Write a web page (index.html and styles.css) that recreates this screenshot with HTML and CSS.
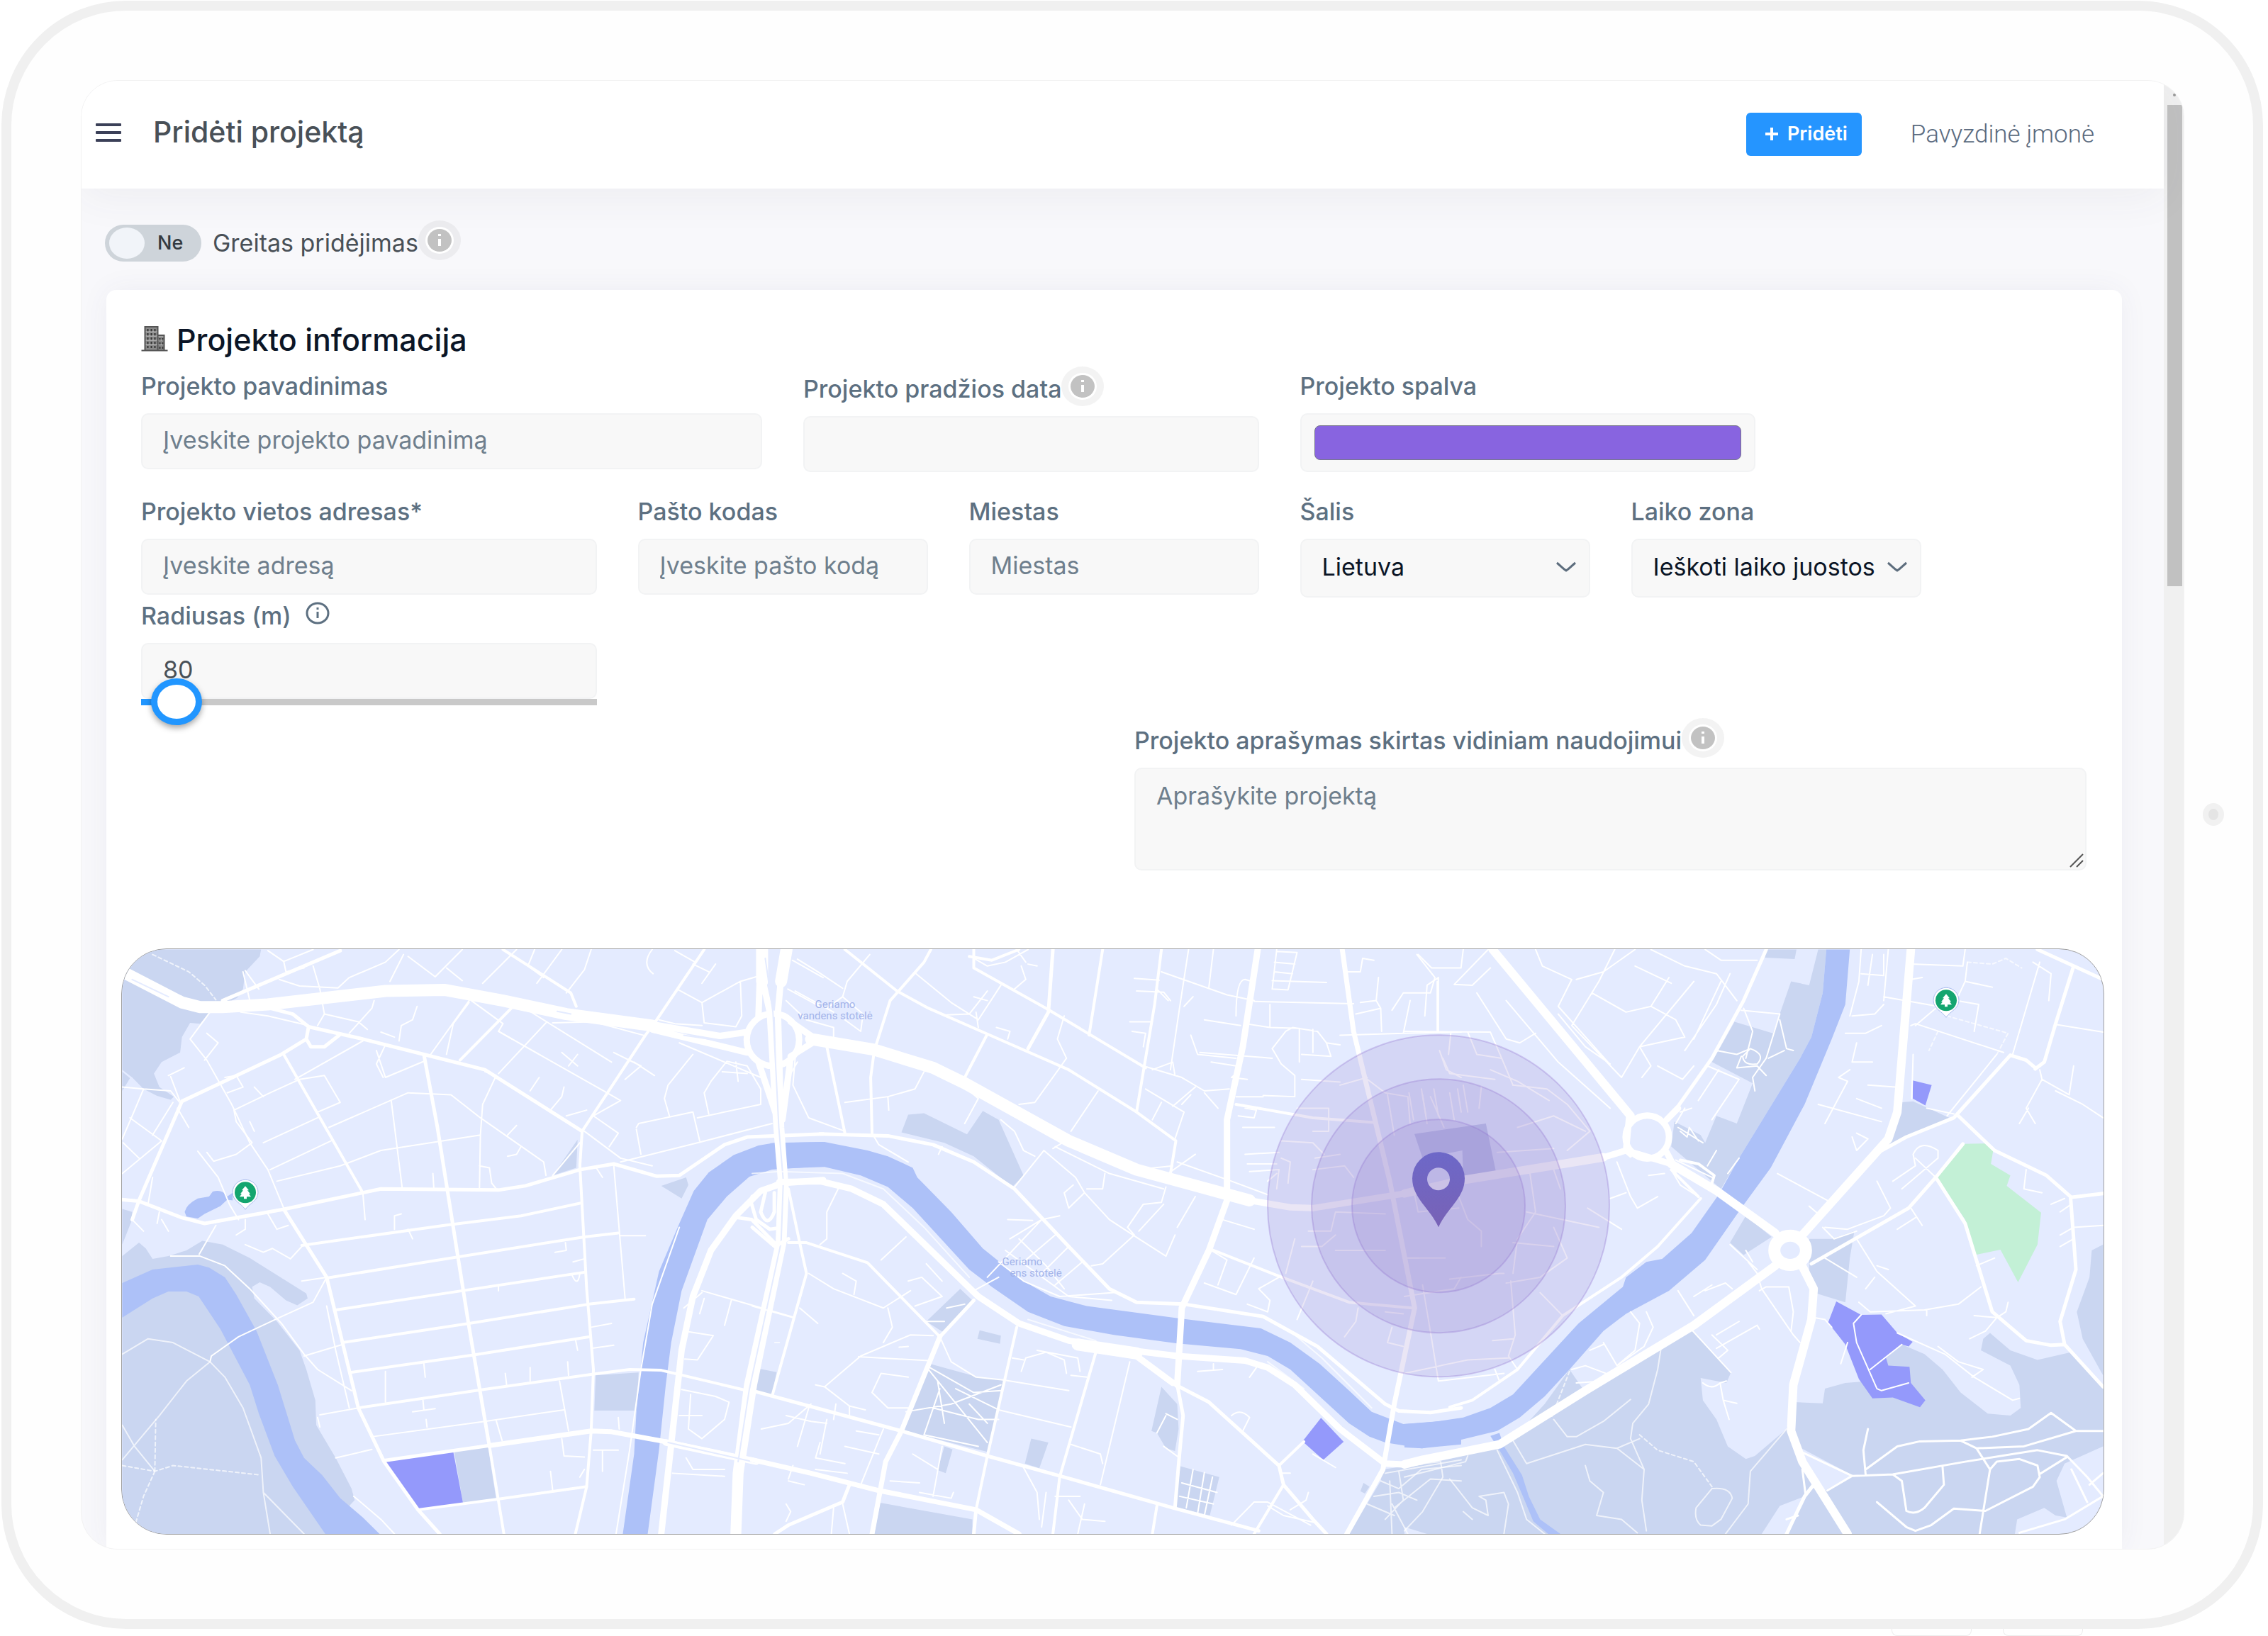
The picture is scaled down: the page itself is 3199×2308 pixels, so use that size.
FILE: index.html
```html
<!DOCTYPE html>
<html lang="lt">
<head>
<meta charset="utf-8">
<meta name="viewport" content="width=device-width, initial-scale=1">
<title>Pridėti projektą</title>
<link rel="stylesheet" href="styles.css">
</head>
<body>
<div class="tablet">
  <div class="screen">
    <div class="page">
      <header class="topbar">
        <button class="menu" type="button" aria-label="Meniu"><span></span><span></span><span></span></button>
        <h1>Pridėti projektą</h1>
        <button class="add" type="button"><svg class="plus" viewBox="0 0 20 20" aria-hidden="true"><path d="M10 1v18M1 10h18"/></svg>Pridėti</button>
        <a class="company" href="#">Pavyzdinė įmonė</a>
      </header>
      <main>
        <div class="quick">
          <label class="switch"><input type="checkbox" aria-label="Greitas pridėjimas"><span class="knob"></span><span>Ne</span></label>
          <span>Greitas pridėjimas</span>
          <svg class="info" viewBox="0 0 60 56" aria-hidden="true"><ellipse class="halo" cx="30" cy="28" rx="30" ry="28"/><ellipse class="ring" cx="30" cy="28" rx="20" ry="19"/><ellipse class="disc" cx="30" cy="28" rx="17" ry="16"/><path class="i" d="M30 26v10M30 19v3"/></svg>
        </div>
        <form class="card">
          <h2><svg class="building" viewBox="0 0 37 36" aria-hidden="true"><path class="wall" d="M5 34V1h18v12h9v21z"/><path class="win" d="M9 4v27M14 4v27M19 4v27M26 17v15M30 17v15"/><path class="floor" d="M5 8h18M5 14h27M5 20h27M5 26h27"/><path class="ground" d="M0 34.500h37M5 34V1h18v33M23 13h9v21"/></svg>Projekto informacija</h2>
          <div class="grid">
            <div class="field w4"><label for="name">Projekto pavadinimas</label><input id="name" type="text" placeholder="Įveskite projekto pavadinimą"></div>
            <div class="field w3"><label class="tall" for="date">Projekto pradžios data<svg class="info" viewBox="0 0 60 56" aria-hidden="true"><ellipse class="halo" cx="30" cy="28" rx="30" ry="28"/><ellipse class="ring" cx="30" cy="28" rx="20" ry="19"/><ellipse class="disc" cx="30" cy="28" rx="17" ry="16"/><path class="i" d="M30 26v10M30 19v3"/></svg></label><input id="date" type="text"></div>
            <div class="field w3"><label for="color">Projekto spalva</label><input id="color" type="color" value="#8864e0"></div>
          </div>
          <div class="grid second">
            <div class="field w3"><label for="address">Projekto vietos adresas*</label><input id="address" type="text" placeholder="Įveskite adresą"></div>
            <div class="field w2"><label for="zip">Pašto kodas</label><input id="zip" type="text" placeholder="Įveskite pašto kodą"></div>
            <div class="field w2"><label for="city">Miestas</label><input id="city" type="text" placeholder="Miestas"></div>
            <div class="field w2"><label for="country">Šalis</label><div class="select"><select id="country"><option>Lietuva</option></select><svg viewBox="0 0 30 16" aria-hidden="true"><path d="M2 2c5 4 8 8 13 11 5-3 8-7 13-11"/></svg></div></div>
            <div class="field w2"><label for="zone">Laiko zona</label><div class="select"><select id="zone"><option>Ieškoti laiko juostos</option></select><svg viewBox="0 0 30 16" aria-hidden="true"><path d="M2 2c5 4 8 8 13 11 5-3 8-7 13-11"/></svg></div></div>
          </div>
          <div class="grid third">
            <div class="field w3 radius"><label for="radius">Radiusas (m)<svg class="hint" viewBox="0 0 34 32" aria-hidden="true"><ellipse cx="17" cy="16" rx="15" ry="14"/><path d="M17 14v9M17 8v3"/></svg></label><input id="radius" type="text" value="80"><input class="slider" type="range" min="50" max="1250" value="80" aria-label="Radiusas (m)"></div>
          </div>
          <div class="grid fourth">
            <div class="field w6"><label class="tall" for="notes">Projekto aprašymas skirtas vidiniam naudojimui<svg class="info" viewBox="0 0 60 56" aria-hidden="true"><ellipse class="halo" cx="30" cy="28" rx="30" ry="28"/><ellipse class="ring" cx="30" cy="28" rx="20" ry="19"/><ellipse class="disc" cx="30" cy="28" rx="17" ry="16"/><path class="i" d="M30 26v10M30 19v3"/></svg></label>
            <div class="area"><textarea id="notes" placeholder="Aprašykite projektą"></textarea><svg viewBox="0 0 22 22" aria-hidden="true"><path d="M2 20 20 2M11 20l9-9"/></svg></div></div>
          </div>
          <svg class="map" viewBox="171 1338 2795 826" preserveAspectRatio="xMidYMid slice" role="img" aria-label="Žemėlapis">
            <defs>
              <linearGradient id="pinfill" x1="0" y1="0" x2="0" y2="1"><stop offset="0" stop-color="#6d68c8"/><stop offset="1" stop-color="#7862b6"/></linearGradient>
              <g id="tree"><path d="M-18 0a18 18 0 1 1 36 0c0 12-12 15-18 24-6-9-18-12-18-24z" fill="#fff" stroke="#a9bbee" stroke-width="1"/><circle r="15" fill="#14a56f"/><path d="M0-9l5 6h-2l4 5h-2l3 4h-6v3h-4v-3h-6l3-4h-2l4-5h-2z" fill="#fff"/></g>
            </defs>
            <!-- parks -->
            <g class="park">
              <g transform="translate(160 1330) scale(.63776 .54209)">
                <path d="M18 17H325L322 35 290 75 285 120 272 143 212 180 190 210 168 208 150 245 146 285 105 310 88 340 100 375 132 400 125 408 95 398 65 380 40 350 18 330ZM18 335 35 352 18 385ZM18 692 40 700 38 725 18 785Z"/>
                <path d="M18 815 55 780 70 795 85 822 120 815 160 800 195 775 240 785 300 820 425 912 428 925 405 943 380 930 345 895 322 883 305 895 310 925 360 985 410 1060 425 1110 445 1190 447 1255 490 1340 525 1420 532 1450 520 1465 540 1538H18Z"/>
                <path d="M752 1324 827 1312 845 1448 772 1460ZM1025 512 1022 585 970 605ZM1210 632 1265 610 1270 630 1255 665ZM1065 1125 1160 1118 1155 1217 1062 1217ZM1423 1107 1465 1117 1455 1175 1413 1168Z"/>
              </g>
              <g transform="translate(1060 1330) scale(.63776 .54209)">
                <path d="M330 493 345 447 380 443 475 498 510 437 545 460 600 605 575 635 490 555 425 520ZM385 985 460 900 487 930 425 1015ZM503 1008 550 1022 548 1043 498 1030ZM393 1095 500 1130 555 1137 522 1325 335 1270ZM425 1310 443 1318 428 1380 410 1372ZM617 1290 655 1300 635 1367 603 1355ZM905 1155 940 1200 943 1265 935 1322 915 1315 895 1275 883 1270ZM947 1362 1033 1390 1012 1490 935 1468ZM283 1457 487 1500V1538H270ZM1395 1370 1568 1340V1538H1320L1390 1400ZM1352 1405 1365 1415 1355 1433 1345 1427Z"/>
              </g>
              <g transform="translate(1980 1330) scale(.63776 .54209)">
                <path d="M800 17 867 17 863 42 797 38ZM915 17 933 17 925 130 900 245 875 300 740 560 700 640 640 580 590 530 597 465 655 500 665 520 690 450 735 470 770 365 680 310 730 205 815 235 830 185 855 100 895 110ZM720 780 755 710 812 765 750 812ZM895 770 945 770 995 750 985 820 975 935 905 910 895 850ZM1095 415 1125 412 1205 455 1130 497 1070 525Z"/>
                <path d="M0 1370 200 1315 240 1290 310 1200 365 1110 400 1170 630 1003 722 1118 712 1145 655 1132 660 1190 690 1240 715 1310 755 1343 775 1335 845 1265 860 1195 925 1198 930 1160 975 1145 1030 1140 1065 1060 1090 1040 1150 1070 1190 1110 1230 1170 1290 1225 1340 1230 1363 1210 1360 1150 1340 1100 1275 1060 1280 1030 1295 1015 1340 1060 1400 1085 1475 1065 1545 1160V1310L1460 1355 1442 1400 1465 1495 1440 1490 1415 1470 1355 1500 1350 1538H0Z"/>
                <path d="M1545 785 1520 800 1515 870 1487 960 1500 1030 1545 1125Z"/>
                <path class="land" d="M790 1538 830 1465 885 1440 850 1538ZM870 1310 990 1385 930 1425ZM0 1520 50 1538H0Z"/>
                <path class="shade" d="M22 497 180 470 203 600 130 612 128 540 40 560Z"/>
              </g>
            </g>
            <!-- water -->
            <g class="water">
              <g transform="translate(160 1330) scale(.63776 .54209)">
                <path d="M18 885 85 850 185 837 210 845 245 870 270 915 315 1010 362 1150 400 1295 420 1340 460 1385 500 1445 550 1495 587 1538H467L395 1415 355 1335 320 1225 300 1150 235 1005 187 920 160 907 120 907 85 925 18 975Z"/>
                <path d="M1568 518 1460 520 1425 527 1370 552 1315 597 1282 645 1250 730 1205 855 1170 1040 1155 1220 1150 1330 1125 1538H1180L1205 1320 1220 1150 1232 1040 1255 905 1312 720 1355 660 1405 608 1455 590 1568 581Z"/>
                <path d="M156 700Q160 680 185 665L210 660 218 647Q240 640 250 660L262 650 262 670 250 668 235 685 200 705 185 717 160 712Z"/>
              </g>
              <g transform="translate(1060 1330) scale(.63776 .54209)">
                <path d="M40 521 160 518 255 540 300 555 355 585 365 610 440 700 510 795 600 880 660 920 740 945 945 977 1125 1003 1190 1040 1255 1095 1320 1165 1370 1220 1440 1252 1568 1240V1305L1480 1315 1400 1300 1365 1285 1320 1250 1255 1180 1190 1110 1140 1075 1080 1057 940 1042 800 1020 690 997 610 960 530 895 480 850 355 690 300 635 240 605 160 583 40 588Z"/>
              </g>
              <g transform="translate(1980 1330) scale(.63776 .54209)">
                <path d="M933 17H985L975 160 945 250 885 420 810 585 745 690 665 825 585 905 490 965 440 1010 365 1110 310 1180 255 1235 205 1270 100 1300 40 1315 0 1313V1252L60 1247 130 1235 190 1210 240 1175 385 990 483 895 490 870 535 830 570 822 635 755 695 655 740 560 875 300 900 245 925 130Z"/>
                <path d="M190 1283 210 1275 220 1310 260 1385 275 1440 300 1500 345 1538H318L285 1505 262 1440 240 1380 210 1320Z"/>
              </g>
            </g>
            <!-- landmarks -->
            <path class="mark" transform="translate(160 1330) scale(.63776 .54209)" d="M597 1350 750 1324 772 1460 672 1475Z"/>
            <path class="mark" transform="translate(1060 1330) scale(.63776 .54209)" d="M1258 1236 1308 1298 1263 1345 1217 1297Z"/>
            <g transform="translate(1980 1330) scale(.63776 .54209)">
              <path class="mark" d="M955 933 1010 968 1055 967 1090 1015 1124 1038 1115 1050 1100 1045 1065 1080 1070 1100 1117 1103 1120 1145 1152 1190 1140 1208 1080 1183 1035 1185 1005 1135 975 1045 937 988ZM1124 358 1166 370 1152 423 1124 405Z"/>
              <path class="green" d="M1177 610 1235 523 1285 522 1302 540 1297 575 1340 605 1332 632 1408 702 1400 785 1357 883 1318 798 1262 812 1240 720Z"/>
            </g>
            <!-- streets, west -->
            <g class="road" transform="translate(160 1330) scale(.63776 .54209)">
              <path class="r2" d="M285 75 300 150M290 72 320 120M340 20 375 48 440 17M375 48 380 75 420 65M440 60 455 120 465 185 450 215M365 95 410 112 495 117 520 90 600 50 630 17M640 30 610 100M650 35 710 88 770 17M735 65 770 98M815 105 890 17M930 17 915 60 950 90M990 17 935 105M1055 17 1040 70 1000 130M1190 17Q1165 55 1192 80M1240 20 1285 50M1280 55 1315 75M1330 55 1300 105M1245 120 1300 155 1385 100 1420 88M1300 155 1305 208 1375 218 1388 190 1385 100M1205 200 1240 210 1300 215"/>
              <path class="r2" d="M280 180 340 190 430 215M465 185 540 205 560 225M575 150 570 170 520 235M670 165 660 200 635 215 630 255M590 232 620 245M212 180 168 250 205 305 260 420 300 520 340 590 375 690M205 235 230 260 200 305M550 255 400 355M580 280 600 350 685 308M600 265 580 315 595 350M785 150 700 290M785 155 750 210 735 290M790 150 860 210 850 230 880 250M970 208 1060 205 1170 240M955 208 850 340M895 160 1100 310"/>
              <path class="r2" d="M120 345 155 325M125 348 145 410M245 350 270 345 285 375 250 390M410 355 465 345 500 415 450 440M265 435 345 390 410 355M265 435 270 465 305 520 270 550 220 568 205 545M300 465 310 490M310 375 330 400M185 542 230 610 255 680 275 720M345 590 480 515M330 520 450 455M360 620 500 580 590 540 810 500M475 480 650 390 745 395 810 455M613 412 637 637M810 455 950 570 955 605M820 335 845 345 815 420 810 500 808 637M808 580 830 585 835 625 845 640M705 600 707 637M870 555 890 550 900 530M870 500 890 475M965 435 990 400 995 375M920 385 940 350"/>
              <path class="r2" d="M970 605 1030 520M850 230 1090 390 1120 410 1060 450M1060 450 1115 495 1095 530M1040 490 1120 560M1120 570 1290 520 1455 470M1155 480 1160 470 1280 440 1295 515M1155 485 1165 550M1290 455 1430 420 1430 380 1400 320 1355 308 1320 360 1305 390 1315 445M1280 290 1225 370 1217 405 1228 450M1250 260 1350 310 1430 350M1375 310 1380 360M1345 335 1400 340M1105 285 1165 320 1130 355M1150 310 1195 345M990 285 1025 320M1005 320 1025 290M1000 450 1045 435M1105 580 1130 925M1065 583 1080 610M1120 762 1175 762M1120 560 1190 580"/>
              <path class="r2" d="M18 375 65 380 125 385 145 415M65 380 40 450 18 510M35 455 105 515 18 600M130 415 85 500M140 430 165 480M20 520 55 560M18 665 55 672M40 720 65 750M75 680 85 610M100 700 95 730M225 735 188 810M125 815 190 815 245 840 300 900 370 990 420 1070 450 1110 525 1165M120 750 105 720M290 785 330 805 350 795 390 822 415 790M290 720 290 745 270 760M340 705 360 745 385 735M550 650 555 720M620 745 620 710 635 705M650 745 660 770M415 880 470 870 440 935 365 975 275 1025 215 1075 212 1090M420 1075 505 1045M470 945 490 1060 520 1210"/>
              <path class="r2" d="M975 805 1000 800 998 780M1015 830 1040 822M1012 862Q1025 900 1030 860M850 890 850 905M1055 1000 1100 990M1055 1055 1105 1047M1020 1030 1025 1060M685 1095 688 1130M600 1115 600 1195M865 1120 868 1150M920 1140 920 1105M1003 1090 1005 1125M660 1220 710 1212M683 1190 685 1215M690 1240 692 1260M455 1228 540 1210M450 1235 455 1260M490 1340 570 1318M845 1243 858 1295M985 1140 1005 1270M990 1290 995 1335 1040 1338M1060 1320 1115 1320M1080 1320 1080 1375M965 1375 970 1425M1040 1370 1030 1390M1115 1235 1117 1265M530 1440 590 1500 620 1538"/>
              <path class="r2 faint" d="M18 1070 75 1030 130 1040 212 1090 245 1130 285 1210 325 1340 330 1430 345 1538M212 1090 160 1140 100 1230 18 1345M330 1430 420 1538M18 1255 45 1310 90 1375"/>
              <path class="r2 dash" d="M18 1360 90 1375 130 1360 320 1384M90 1375 92 1240M90 1375 65 1440 45 1520M85 30 165 75 200 110 225 148"/>
              <path class="r2" d="M1300 905 1505 975M1300 910 1260 950M1305 925 1295 965M1365 930 1350 995M1260 1010 1325 1022 1290 1085 1262 1083M1255 1162 1330 1180 1360 1195 1350 1240 1300 1290 1270 1265 1275 1175M1250 1230 1300 1230M1235 1380 1350 1388M1265 1340 1280 1370 1350 1370M1250 740 1190 940 1165 1110 1140 1320 1110 1538M1500 45 1568 90M1490 120 1560 165"/>
              <path class="r5" d="M240 150 500 20M345 170 395 185 430 218 550 250 685 290 820 330 1035 490M430 218 425 250 370 290 150 412 55 670 40 720M425 250 435 270 465 270 500 238M685 290 715 480 785 1000 830 1310"/>
              <path class="r4" d="M830 1310 862 1538M375 290 550 650M880 168 765 305M860 17 1010 130 1022 165M1305 17 1200 200 1175 240 1035 490 1030 580 1045 900 1060 1110 1055 1270 1045 1415 1020 1538"/>
              <path class="r5" d="M18 668 55 672 150 715 200 730 375 693 550 650 590 640 850 643 910 632 1030 590 1105 575 1200 607 1250 605 1350 525 1400 505 1568 497M375 693 470 870 540 1210 597 1350 672 1475 720 1538M597 1347 830 1308"/>
              <path class="r4" d="M415 787 730 735 900 710 1032 677M470 872 760 817 1040 765 1115 755M490 955 770 905 1040 857M505 1040 785 990 1050 940 1150 927M522 1118 795 1072 1050 1025M540 1210 800 1165 1060 1122 1140 1110 1210 1112 1411 1168M672 1475 845 1448 1045 1415"/>
              <path class="r2" d="M570 1285 820 1245 995 1215"/>
              <path class="r7" d="M830 1308 1055 1270 1100 1272 1220 1298 1411 1345"/>
              <path class="r16" d="M30 82 150 155 190 167 240 167 340 160 600 125 730 122 860 150 1000 185 1190 215"/>
              <path class="r10" d="M1190 212 1340 242 1400 232M1190 225 1400 285M1220 1300 1420 1350"/>
              <path class="r10" d="M1568 617 1480 625 1430 645 1375 710 1320 800 1280 920 1255 1060 1240 1220 1210 1538"/>
              <path class="r5" d="M1380 715 1410 720 1460 780M1410 680 1420 720 1450 745 1480 740M1440 650 1430 700Q1445 745 1460 700L1460 650"/>
              <ellipse class="r10" cx="1457" cy="252" rx="58" ry="68"/>
              <path class="r16" d="M1433 17 1433 100M1487 17 1475 100"/>
              <path class="r10" d="M1433 90 1450 180 1465 480 1475 620 1470 780 1400 1150 1375 1380 1370 1538M1475 90 1468 180 1475 480 1485 640 1480 780 1415 1150 1385 1380 1380 1538M1428 90 1425 190M1425 310 1465 450M1495 310 1478 460"/>
              <path class="seam" d="M1440 40 1457 180 1470 480 1480 620 1475 780 1405 1160 1380 1350M40 95 120 140M980 178 1010 185M1225 1300 1420 1352M1260 240 1390 263"/>
            </g>
            <!-- streets, centre -->
            <g class="road" transform="translate(1060 1330) scale(.63776 .54209)">
              <path class="r2" d="M100 42 145 75 200 118M260 30 210 100 200 140 165 170M95 125 180 180M75 150 120 200 180 220 180 250M200 140 245 185 240 230 205 200M360 78 440 155 500 200 550 110M520 125 480 185 430 187M490 140 520 150M495 180 500 220M595 60 605 95 580 120M490 40 520 60 560 50 610 17M585 17 605 50M610 55 630 60M540 220 570 230 565 250M690 190 675 250 695 300 680 325M680 325 625 415 590 420M765 385 705 490M845 92 900 97M850 125 910 128 925 150M905 75 1050 135 1110 150M965 17 945 170 925 330M1020 17 1010 115M835 205 885 205M840 230 870 235 865 270M975 140 955 165M920 150 895 120"/>
              <path class="r2" d="M1070 190Q1070 95 1090 95L1105 100M1160 17 1150 120 1185 122 1205 25 1160 22M1155 50 1200 55M1155 75 1195 80M1150 98 1270 103M1110 152 1330 158M1145 160 1145 220 1210 222 1210 310M1145 220 1090 210M1150 275 1180 230 1195 220 1250 230 1270 260 1300 265M1150 275 1170 315 1200 345 1200 400 1130 397M1215 355 1300 362M1270 260 1280 295 1215 290M1240 225 1240 285M990 285 1150 300M1000 200 1080 215M970 240 985 290 1070 300M1015 310 1070 320M870 380 955 440 935 510M865 320 950 350 1000 385 1055 380M980 375 930 425M905 415 885 460M950 420 970 395M1000 390 1030 430M885 330 930 310 935 345"/>
              <path class="r2" d="M1080 330 1060 350 1095 355M1070 400 1130 400M1090 430 1115 435 1110 455 1075 450M1085 480 1155 480M1090 550 1165 545M1095 575 1160 575M1100 595 1165 590 1160 640M1170 515 1240 520 1265 550M1170 560 1190 570 1185 625M1140 620 1160 600M1205 430 1275 430 1275 490 1240 490M1245 560 1300 550M1240 590 1310 580 1330 610M1230 750 1280 750 1290 700 1400 705M1215 790 1260 790 1290 760M1200 770 1180 860M1240 880 1205 980M1340 950 1335 985 1310 1025M1290 800 1400 800M1440 820 1475 820M1400 960 1440 965M1415 1000 1405 1040 1440 1050"/>
              <path class="r2" d="M1300 240 1440 235 1568 232M1345 155 1380 150 1390 170 1392 230M1335 185 1390 170M1310 75 1345 75 1350 40 1375 45M1385 90 1380 150M1415 175 1440 130 1500 130 1510 90 1470 30M1515 100 1515 232M1440 235 1455 150M1355 350 1400 390 1450 400M1300 370 1360 350M1405 395 1420 500M1450 400 1455 470M1480 380 1490 450M1520 280 1535 330 1568 350M1545 235 1540 290M1500 400 1530 480M1560 380 1568 440"/>
              <path class="r2" d="M470 375 500 405 470 470M550 460 580 490 600 540 625 555M665 535 700 510M645 540 580 635M645 540 715 610 735 650 700 690 690 650 710 630M740 640 775 640 780 600M735 650 790 720 855 770M670 530 790 600 910 640M850 590 930 580M920 600 980 550M940 570 1060 620 1140 655M915 635 905 675 865 680 830 740M910 680 855 750M830 740 845 760 775 835 750 840M855 770 915 815 935 760M980 660 940 740M565 720 620 722M570 770 640 720 680 710M590 770 650 840 690 900M560 800 700 920 795 930M640 720 520 870M670 760 600 830M700 790 640 860M730 830 670 890M545 870 490 905M545 830 600 880 680 920 800 910"/>
              <path class="r2" d="M205 415 300 400 360 380 380 335M300 400 302 435M95 300 90 370 125 455 205 490M85 340 100 310M265 495 280 525 345 570M420 530 412 550M340 765 285 825M190 640 165 700 165 770 150 785M345 880 375 870 420 920 360 945M385 835 420 880M200 860 230 880 225 915M125 860 180 900 290 950 350 905M300 950 310 1000 290 1040M0 945 90 975M105 950 145 990M160 1155 240 1075 350 1020 400 1022M235 1077 390 1087M140 1150 160 1155 215 1205 250 1215M265 1170 285 1120 345 1130M265 1170 300 1210 345 1210M215 1205 215 1235M325 1052 345 1050M575 1080 600 1085M595 1115 605 1080 650 1065 690 1085 695 1120M630 1060 720 1080 725 1115M705 1125 740 1130M555 1137 700 1165"/>
              <path class="r2" d="M545 1215 705 1260M705 1305 770 1330 775 1355M415 1025 440 1090 495 1130 555 1137M393 1105 490 1170 550 1165M400 1210 500 1240 545 1240M390 1110 520 1300M415 1160 380 1280 500 1310M340 1220 440 1200 550 1150M410 1140 425 1250M480 1200 520 1250M450 1160 545 1215M385 985 425 985M430 950 470 940M600 1365 630 1430 635 1500M650 1430 640 1520M670 1440 725 1440M700 1450 730 1500 780 1505M735 1460 720 1538M20 1265 80 1250 130 1200M75 1230 130 1245 165 1250M125 1210 100 1310M185 1200 180 1240M230 1270 280 1280M150 1300 140 1340 205 1355M140 1370 210 1380M80 1395 90 1360M80 1400 115 1410M165 1240 150 1330M290 1265 240 1410M205 1310 280 1330M305 1400 370 1405M355 1330 410 1370M420 1310 400 1440M370 1430 440 1445 445 1430M75 1460 85 1480 75 1505M180 1470 175 1538M200 1460 215 1538"/>
              <path class="r2" d="M1000 885 1070 915 1110 820M1040 720 1110 745M1015 800 1050 825 1030 890M1095 940 1140 960 1145 930 1120 900 1165 870M985 1115 1040 1110M1020 1095 1020 1110M1115 1105 1100 1130M1060 1230Q1080 1210 1100 1235L1085 1270M1170 1380 1190 1380M1240 1330 1290 1365M1230 1430 1225 1450 1190 1475M1060 1515 1110 1455 1140 1455 1235 1515M1140 1465 1175 1490 1250 1510M975 1370 960 1470M1000 1378 985 1485M950 1405 1028 1430M945 1440 1020 1460M1018 1390 1000 1490M895 1275 915 1230M910 1310 945 1340M915 1225 940 1240"/>
              <path class="r2 faint" d="M1400 1380 1568 1345M1390 1400 1430 1420 1480 1370 1568 1360M1410 1400 1415 1538M1430 1375 1440 1450 1400 1500M1375 1440 1430 1430 1470 1450M1420 1470 1500 1395 1568 1400M1360 1460 1420 1490M1415 1460 1450 1538"/>
              <path class="r2 faint" d="M0 600 60 595 200 600 290 640 380 740 480 870M1190 1010 1260 1080 1370 1210M1140 1090 1220 1160M50 1040 60 1040M610 980 760 1035"/>
              <path class="r4" d="M205 17 320 125 390 170 520 237 700 330 850 440 937 515 925 600M395 17 380 50 305 150 270 280 262 350 265 495M165 270 205 495M490 65 650 170 870 325M490 17 490 65M480 35 530 45 590 17M775 17 745 240M905 17 890 160 850 440M520 237 470 350M1070 420 1240 455 1375 467M1010 795 1160 865 1320 935 1460 950M80 780 120 780 255 832 415 1025M80 640 105 780 120 860 45 1175M585 1000 520 1335 495 1475M760 1065 680 1390 665 1538M895 1465 885 1538M1165 1360 1220 1298M1175 1410 1110 1538"/>
              <path class="r2" d="M835 1090 770 1410"/>
              <path class="r5" d="M665 17 655 180 610 275M150 497 300 502 400 525 490 570 580 640 700 790 790 900 850 935 955 940 1130 972 1250 1050 1400 1200 1430 1218 1500 1222 1568 1210M0 1165 330 1270 520 1335 690 1390 930 1470 1120 1530M850 1075 920 1140 1010 1195 1165 1360 1175 1410 1240 1500 1270 1538M940 1150 953 1230 945 1330 935 1470M415 1025 490 930M495 1475 490 1538M215 1410 200 1455 80 1515 50 1538"/>
              <path class="r7" d="M415 1025 330 1270 295 1350 265 1538M0 1345 130 1380 280 1425 495 1475 590 1538M1305 17 1330 230 1410 620 1465 950 1420 1200 1395 1370 1315 1538"/>
              <path class="r10" d="M1118 17 1085 270 1050 460 1050 670 1010 800 950 950 940 1150M1240 690 1443 652"/>
              <path class="r16" d="M130 250 270 278 400 325 470 365 700 515 850 590 960 625 1100 670M720 1045 850 1068"/>
              <path class="r10" d="M1100 670 1190 688 1240 690M85 205 140 250M85 295 140 255M60 622 150 620 220 640 290 680 360 760 500 920 590 990 700 1035 850 1062 940 1075 1090 1087 1140 1105 1200 1150 1300 1265 1400 1355 1440 1357 1480 1350M850 1075 930 1145"/>
              <path class="r5" d="M0 660 60 622M0 740 50 790 80 770"/>
            </g>
            <!-- streets, east -->
            <g class="road" transform="translate(1980 1330) scale(.63776 .54209)">
              <path class="r2" d="M30 30 60 65 125 65 130 17M110 108 150 110 190 65M45 190 50 110 75 90 75 230M0 230 190 232 215 300 240 370M185 17 110 108M160 130 225 250 255 260 290 235M225 150 340 310 455 430M290 17 305 60 370 95 340 165 450 310M465 17 430 100 370 215 480 350M415 130 490 180 545 165 585 90M545 165 600 200 620 245 520 270 480 350M520 270 640 100M510 60 590 105M380 95 440 75 510 17M545 17 620 60 690 80 735 150M665 17 700 45 780 45M720 80 690 160 620 280M700 100 640 250M745 175 830 185M750 170 770 230 755 300M560 320 615 355 640 320M520 270 545 320 525 350M340 185 400 270 455 315M670 320 740 355 680 460M695 330 650 410"/>
              <path class="r2" d="M690 280 735 290 765 275Q800 290 780 315 750 320 748 295L765 275M735 325 780 320 800 345M830 185 800 300 770 350 775 385M830 200 845 275 860 280M805 300 840 280M735 325 745 295M620 430 600 470M605 480 660 520M610 490 625 505 630 480 650 515M690 540 670 580M600 565 680 610M610 440 635 430M740 560 715 600M825 600 935 670M915 420 1055 465M985 330 960 350 980 360 930 470M1025 370 1085 375M1000 405 1055 430M990 190 1040 185 1060 160M975 235 1020 235 1055 215M1000 260 990 310 1035 310M1010 17 1005 100 985 190M1035 30 1025 110M1010 80 1060 85 1060 30M1070 17 1060 150M1120 95 1145 90M1060 140 1180 165M1120 215 1130 210 1325 285M1125 290 1122 405M1180 165 1130 215M1240 100 1220 150 1270 160 1260 230"/>
              <path class="r2 dash" d="M1180 230 1160 280M1200 190 1335 235 1310 290M1245 50 1300 55 1330 40 1365 65"/>
              <path class="r2" d="M1120 55 1235 60 1240 17M1245 50 1240 100 1300 115M1390 50 1430 80 1425 150M1405 50 1345 290M1440 212 1545 232M1405 330 1410 355 1470 395 1480 320M1410 355 1375 430 1395 470M1440 385 1500 420 1545 455M1380 430 1360 470M1310 290 1200 450M1155 430 1215 445M990 505 1000 540 1025 510 1000 495M1045 620 1075 690 1060 710 980 745 930 740M1080 620 1130 580 1125 550Q1140 510 1180 540L1180 560 1100 640M1120 690 1145 735M1090 745 1130 715M895 685 915 705M925 740 950 770 1000 750M1130 560 1175 610M1000 770 1045 855 1130 945 1065 965M1045 840 1070 850M1020 900 1040 870M930 820 1000 870M1005 935 1030 960 1150 955 1225 940 1275 895M1155 955 1155 970M1265 840 1305 820M1375 590 1370 640 1410 650M1430 680 1460 665M1450 700 1475 680M1450 760 1480 740 1545 735M1450 790 1480 770M1250 1030 1285 1010 1310 975 1330 960 1335 935M1260 970 1310 975"/>
              <path class="r2" d="M1010 968 993 990 1000 1040 1045 1160 1055 1165 1115 1145M1030 1110 1100 1045M1090 1015 1195 1070 1260 1130 1345 1190 1360 1185M1180 1050 1225 1090 1280 1110 1255 1130M980 1040 965 1095M905 975 930 980 945 1000M605 905 640 970M780 860 790 900 860 1020 875 1040M785 905 800 895 850 895 860 960 855 1010M665 905 710 885 725 900M640 920 680 890M630 1000 722 1118M680 1020 715 1060 695 1080M690 1055 780 995 785 1005M690 1020 740 985M440 1040 470 1100 510 1060 520 990 500 960M535 960 550 1000 530 1050 470 1100M410 1060 440 1045M370 1110 400 1100 445 1120 440 1140 380 1145M780 860 760 830M720 785 780 850M755 800 770 830M540 605 575 600M470 570 500 660 515 690 560 660M490 650 455 665M590 590 610 630 650 660M660 1145Q680 1165 698 1145L712 1140M698 1145 705 1190 735 1198M705 1190 718 1240"/>
              <path class="r2" d="M240 370 315 380 360 420 410 490 360 540M215 300 160 290 140 232M190 330 250 360 320 410M250 480 330 450 400 490M205 545 330 535M85 300 100 340 200 355M130 370 140 440M170 375 165 430M100 390 110 460M65 380 75 450M40 395 50 470M10 390 20 460M120 660 140 720 170 750 170 790M20 640 30 700 120 690M0 820 90 820M270 700 430 740M275 580 290 700 250 770 240 860M330 740 360 820 300 870 225 885M100 875 210 860 220 860M330 590 345 640M405 690 480 745M240 780 330 790M300 910 350 970M40 890 60 1030 75 1140M0 1120 140 1085 230 1080M235 880 245 1020 230 1075 250 1110M75 1140 220 1120M200 1110 210 1140M195 1035 240 1030M125 870 110 900 0 920"/>
              <path class="r2 faint" d="M240 1295 270 1355 400 1305 470 1315 520 1290M330 1240 360 1285 380 1285 440 1245 500 1188M568 1050 560 1110 540 1200 505 1250 500 1290 530 1370 525 1450 535 1530M400 1360 410 1400 440 1430 425 1490 480 1500 515 1535M470 1315 530 1370M655 1515Q640 1500 645 1470L680 1420Q720 1415 725 1445L700 1500 680 1517ZM845 1265 765 1375 760 1460 710 1538M205 1320 250 1430 270 1500 310 1538M80 1350 85 1390 40 1480 0 1530M0 1390 135 1350 140 1335M0 1360 80 1350M100 1395 150 1470 185 1490 180 1450 165 1440 220 1430 230 1460 220 1538M130 1480 150 1500"/>
              <path class="r2 dash" d="M520 1280 560 1320 640 1350 680 1415M365 1115 325 1235"/>
              <path class="r3" d="M1025 1265 1015 1320 1020 1385M1020 1370 1090 1310 1140 1297 1230 1295 1300 1285 1380 1265 1430 1223 1485 1270 1545 1270M1230 1295 1265 1315 1370 1310 1485 1270M870 1320 990 1387 1080 1383 1240 1350 1400 1320 1465 1335 1510 1390 1545 1440M1080 1383 1100 1400 1110 1478Q1130 1490 1150 1470L1193 1410 1190 1363M1265 1315 1295 1370 1272 1538M1295 1370 1310 1350 1360 1343 1400 1360 1405 1390 1390 1415 1285 1478 1215 1472 1165 1515 1130 1530 1110 1520 1045 1455M1405 1382 1465 1338M1545 1440 1460 1500 1360 1535M1545 1380 1515 1410M1475 1370 1510 1455M935 1425 990 1387M880 1370 887 1435M845 1500 870 1490"/>
              <path class="r5" d="M590 450 680 300 750 150 800 17M1040 550 1110 505 1215 455 1340 292 1375 305 1395 325M1480 60 1440 210 1415 310 1395 328M1400 17 1480 60 1545 95M1225 450 1305 540 1420 605 1473 660 1485 850 1450 985 1460 1045 1545 1155M1473 662 1545 652M1460 1045 1430 1047 1375 1035 1300 960 1240 730 1175 610 1115 690 900 835M1175 610 1235 523M905 1410 885 1440 845 1538"/>
              <path class="r4" d="M100 1208 150 1190 250 1110 350 970 480 870 560 790 655 665M590 590 650 660M610 565 650 575 685 605 680 625M485 540 500 555"/>
              <path class="r12" d="M195 17 500 450M0 652 130 617 440 558M590 575 690 645 820 755M1120 17 1090 440 1070 510 880 760M820 840 640 995 400 1165 210 1305 40 1345 0 1357M875 830 905 900 900 980 860 1150 855 1270 880 1350 980 1538"/>
              <path class="r10" d="M440 558 490 540 590 575M580 460 605 430M497 450 490 540M580 545 600 590"/>
              <ellipse class="r10" cx="537" cy="505" rx="48" ry="56"/>
              <ellipse class="r16" cx="853" cy="800" rx="35" ry="38"/>
            </g>
            <!-- place names -->
            <g class="place"><text x="1177" y="1422">Geriamo</text><text x="1177" y="1438">vandens stotelė</text><text x="1441" y="1785">Geriamo</text><text x="1460" y="1801">ens stotelė</text></g>
            <!-- radius and pin -->
            <g class="zone"><circle cx="2028" cy="1701" r="241"/><circle cx="2028" cy="1701" r="179"/><circle cx="2028" cy="1701" r="122"/></g>
            <path fill="url(#pinfill)" fill-rule="evenodd" d="M2028 1731C2016 1704 1991 1690 1991 1662a37 37 0 0 1 74 0C2065 1690 2040 1704 2028 1731ZM2028 1647a16 16 0 1 0 0 32 16 16 0 0 0 0-32Z"/>
            <use href="#tree" x="345" y="1682"/><use href="#tree" x="2744" y="1411"/>
          </svg>
        </form>
      </main>
    </div>
    <div class="scrollbar" aria-hidden="true"><div class="arrow"></div><div class="thumb"></div></div>
  </div>
  <div class="home"></div>
</div>
<div class="keys"><span></span><span></span></div>
</body>
</html>
```

FILE: styles.css
```css
* { box-sizing: border-box; }

body {
  margin: 0;
  background: #fff;
  color: #495057;
  font-family: Inter, "Open Sans", sans-serif;
  font-size: 34px;
  line-height: 36px;
}

h1, h2 { margin: 0; font-weight: 500; }
button, input, select, textarea { font: inherit; margin: 0; }

/* device frame */
.tablet {
  position: relative;
  margin: 1px 7px 0 2px;
  padding: 98px 97px 98px 98px;
  border: 14px solid #f0f0f0;
  border-radius: 176px;
  background: #fefefe;
}
.screen {
  display: flex;
  border: 1px solid #f2f2f2;
  border-radius: 52px;
  overflow: hidden;
  background: #f8f8fb;
}
.home {
  position: absolute;
  right: 41px;
  top: 50%;
  width: 30px;
  height: 32px;
  margin-top: -16px;
  border: 8px solid #f1f1f1;
  border-radius: 50%;
  background: #e4e4e4;
}
.keys { display: flex; justify-content: flex-end; gap: 44px; padding-right: 261px; }
.keys span {
  width: 113px;
  height: 10px;
  border: 1px solid #ececec;
  border-top: 0;
  border-radius: 0 0 8px 8px;
}

.page { flex: 1; min-width: 0; }
.scrollbar { width: 28px; padding: 12px 2px 0 5px; background: #f0f0f0; }
.arrow { width: 4px; height: 4px; margin: 6px 8px 12px; background: #999; border-radius: 2px; }
.thumb { height: 33%; background: #c1c1c1; }

/* top bar */
.topbar {
  position: relative;
  display: flex;
  align-items: center;
  height: 152px;
  padding: 0 98px 0 20px;
  background: #fff;
  box-shadow: 0 12px 60px rgba(60, 60, 90, .06);
}
.menu {
  display: flex;
  flex-direction: column;
  gap: 7px;
  width: 36px;
  margin-bottom: 6px;
  padding: 0;
  border: 0;
  background: none;
}
.menu span { height: 4px; border-radius: 1px; background: #3b4058; }
h1 { flex: 1; margin: 0 0 8px 45px; font-size: 41px; line-height: 48px; }
.add {
  display: flex;
  align-items: center;
  gap: 12px;
  height: 61px;
  margin-bottom: 2px;
  padding: 0 20px 0 26px;
  border: 0;
  border-radius: 6px;
  background: #2595ff;
  color: #fff;
  font-size: 27px;
  font-weight: 600;
}
.plus { width: 20px; height: 20px; fill: none; stroke: #fff; stroke-width: 4; }
.company {
  margin-left: 69px;
  color: #5b6b80;
  font-family: Roboto, sans-serif;
  font-weight: 300;
  font-size: 35px;
  text-decoration: none;
}

/* quick add */
.quick { display: flex; align-items: center; height: 52px; margin: 51px 0 40px 33px; }
.switch {
  display: flex;
  align-items: center;
  gap: 18px;
  width: 136px;
  height: 52px;
  margin-right: 16px;
  padding: 0 6px;
  border-radius: 26px;
  background: #ced4da;
  color: #343a40;
  font-size: 27px;
  font-weight: 500;
}
.switch input { position: absolute; opacity: 0; }
.knob { width: 50px; height: 44px; border-radius: 50%; background: #f1f4f9; }
.info { flex: none; width: 60px; height: 56px; margin: -14px 0 -6px; }
.halo { fill: #888; fill-opacity: .1; }
.ring { fill: #fff; }
.disc { fill: #c2c2c2; }
.i { fill: none; stroke: #fff; stroke-width: 4; }

/* form */
.card {
  margin: 0 59px 0 35px;
  padding: 46px 50px 20px 49px;
  border-radius: 14px 14px 0 0;
  background: #fff;
  box-shadow: 0 0 40px rgba(60, 60, 120, .06);
}
h2 { display: flex; align-items: center; gap: 12px; margin-bottom: 24px; font-size: 43px; line-height: 48px; color: #0b1526; }
.building { width: 38px; height: 36px; margin-bottom: 2px; fill: none; }
.wall { fill: #8a8a8a; }
.win { stroke: #333; stroke-width: 2; stroke-dasharray: 4 2; }
.floor { stroke: #c8c8c8; stroke-width: 1; }
.ground { stroke: #555; stroke-width: 2; }

.grid { display: grid; grid-template-columns: repeat(12, minmax(0, 1fr)); column-gap: 58px; align-items: start; }
.second { margin-top: 38px; }
.third { margin-top: 8px; }
.fourth { margin-top: 34px; }
.w2 { grid-column: span 2; }
.w3 { grid-column: span 3; }
.w4 { grid-column: span 4; }
.w6 { grid-column: 7 / span 6; }

.field label { display: flex; margin-bottom: 20px; color: #5d7081; font-weight: 500; white-space: nowrap; }
.field .tall { padding-top: 4px; }
.field input, .field select, .field textarea {
  display: block;
  width: 100%;
  height: 79px;
  padding: 0 29px 4px;
  border: 2px solid #f2f3f4;
  border-radius: 10px;
  background: #f8f8f8;
  color: #495057;
}
.field ::placeholder { color: #6f7f8d; opacity: 1; }
.field input[type="color"] { height: 83px; padding: 15px 18px; }
::-webkit-color-swatch-wrapper { padding: 0; }
::-webkit-color-swatch { border: 1px solid #77788a; border-radius: 8px; }
.select, .area { position: relative; }
.field select { height: 83px; padding-right: 0; appearance: none; color: #0b1526; }
.select svg { position: absolute; right: 19px; top: 32px; width: 30px; height: 16px; fill: none; stroke: #5d6d7d; stroke-width: 3; }
.hint { width: 34px; height: 32px; margin: -2px 0 0 20px; fill: none; stroke: #5d7081; stroke-width: 3; }
.field textarea { height: 145px; padding: 20px 29px; resize: none; }
.area svg { position: absolute; right: 3px; bottom: 3px; width: 22px; height: 22px; stroke: #555; stroke-width: 2; }

.radius .slider {
  appearance: none;
  height: 66px;
  margin: -29px 0 -34px;
  padding: 0;
  border: 0;
  background: none;
}
.slider::-webkit-slider-runnable-track { height: 9px; background: linear-gradient(90deg, #2196ff 40px, #c9c9c9 40px); }
.slider::-webkit-slider-thumb {
  appearance: none;
  width: 72px;
  height: 66px;
  margin-top: -29px;
  border: 9px solid #2196ff;
  border-radius: 50%;
  background: #fff;
  box-shadow: 0 4px 8px rgba(0, 0, 0, .35);
}

/* map */
.map {
  display: block;
  width: calc(100% + 53px);
  aspect-ratio: 2795 / 826;
  margin: 110px -25px 0 -28px;
  border: 1px solid #a0a0a0;
  border-radius: 64px;
  overflow: hidden;
  background: #e4ebff;
}
.map path, .map ellipse { vector-effect: non-scaling-stroke; }
.park { fill: #cad6f1; }
.land { fill: #e4ebff; }
.shade { fill: #bcc5ec; }
.water { fill: #adc1f8; }
.mark { fill: #9499fb; }
.green { fill: #c3f0d6; }
.road { fill: none; stroke: #fff; stroke-linejoin: round; stroke-linecap: round; }
.r2 { stroke-width: 2; }
.r3 { stroke-width: 3; }
.r4 { stroke-width: 4; }
.r5 { stroke-width: 5; }
.r7 { stroke-width: 7; }
.r10 { stroke-width: 9; }
.r12 { stroke-width: 12; }
.r16 { stroke-width: 17; }
.faint { opacity: .7; }
.dash { stroke-dasharray: 5 4; opacity: .7; }
.seam { stroke: #e4ebff; stroke-width: 2; }
.place { fill: #a3b4ea; font-family: Roboto, sans-serif; font-size: 15px; text-anchor: middle; }
.zone { fill: rgb(150, 130, 205); fill-opacity: .2; stroke: #9678d2; stroke-opacity: .35; stroke-width: 2; }
```
